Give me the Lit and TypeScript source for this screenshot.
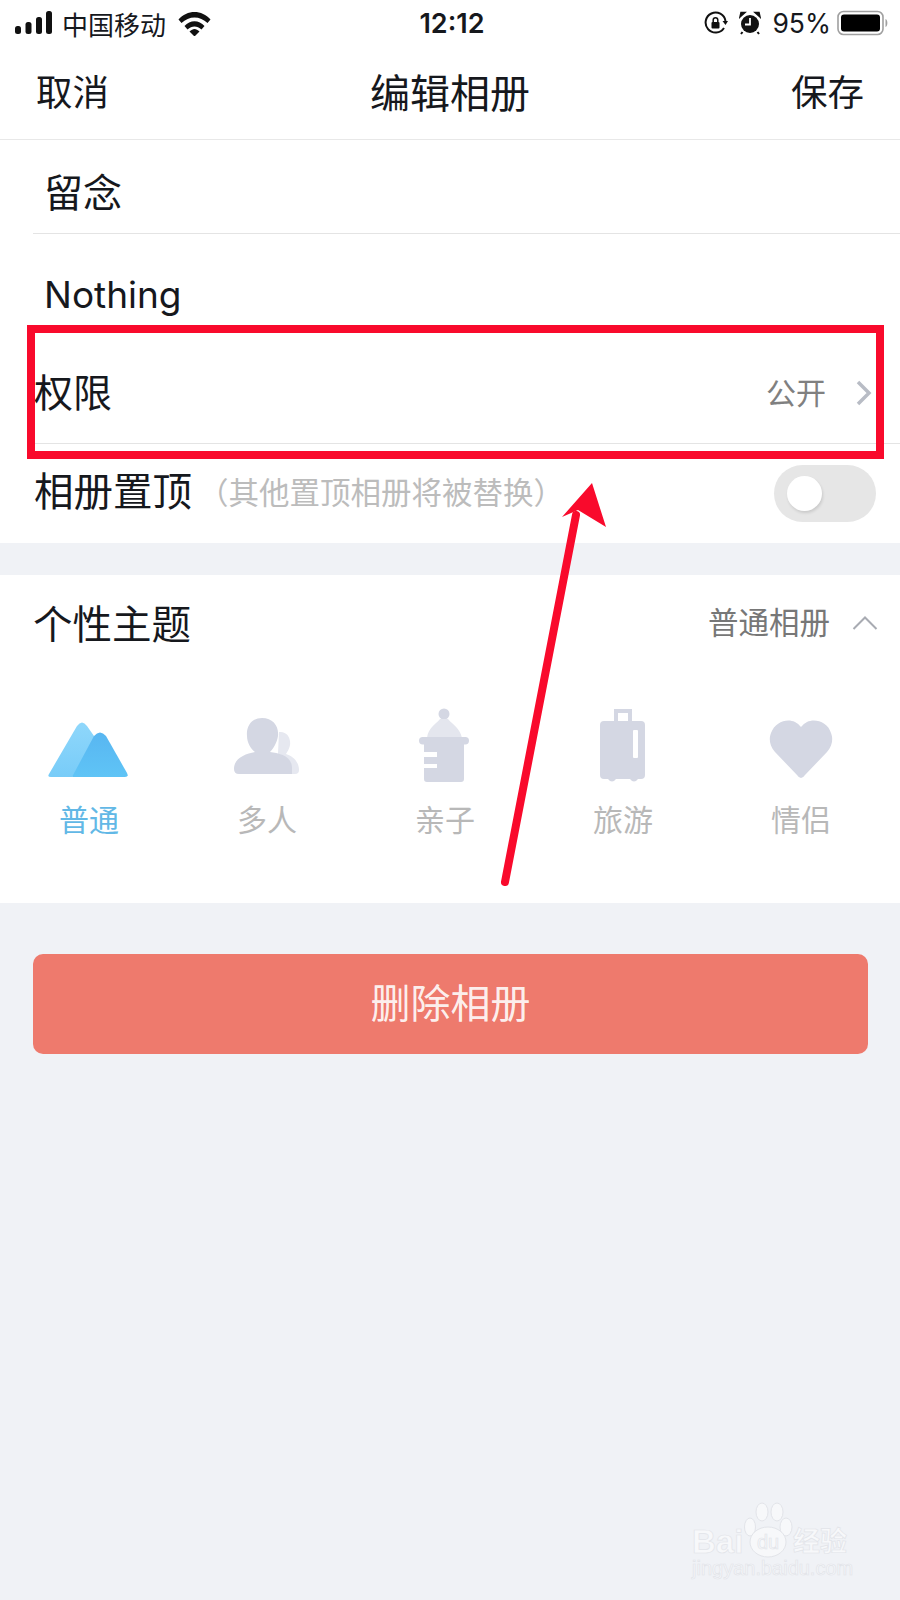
import { html, css, svg, LitElement } from 'lit';
import { customElement } from 'lit/decorators.js';

const icons = {
  mountain: svg`
    <defs>
      <linearGradient id="m1" x1="0" y1="0" x2="0" y2="1"><stop offset="0" stop-color="#8fd7fb"/><stop offset="1" stop-color="#78ccf8"/></linearGradient>
      <linearGradient id="m2" x1="0" y1="0" x2="0" y2="1"><stop offset="0" stop-color="#58b6f1"/><stop offset="1" stop-color="#5fc4f6"/></linearGradient>
    </defs>
    <path d="M10 74 L38 26 Q43 19 48 26 L62 46 L33 77 L12 77 Q8 77 10 74Z" fill="url(#m1)"/>
    <path d="M33 77 L55 36 Q61 29 67 36 L88 73 Q90 77 86 77Z" fill="url(#m2)"/>`,
  people: svg`
    <path d="M62 32 C70 31 74 38 73 45 C72 50 70 52 69 54 C76 56 82 62 82 70 Q82 74 78 74 L60 74 Z" fill="#e6e8f0"/>
    <path d="M45 18 C56 18 62 26 61 36 C60 43 56 49 53 52 C62 53 75 56 75 68 L75 74 L22 74 Q17 74 17 69 C17 58 28 54 38 52 C34 49 30 43 30 36 C29 26 35 18 45 18Z" fill="#d4d7e3"/>`,
  bottle: svg`
    <circle cx="49" cy="14" r="5.5" fill="#d4d7e3"/>
    <path d="M32 38 C33 28 40 25 45 19 L53 19 C58 25 65 28 67 38Z" fill="#e4e6ee"/>
    <rect x="24" y="37" width="50" height="7.5" rx="3.7" fill="#d4d7e3"/>
    <path d="M29 44 H69 V79 Q69 82 66 82 H32 Q29 82 29 79 V68 H42 V64 H29 V57 H42 V52 H29Z" fill="#d4d7e3"/>`,
  suitcase: svg`
    <path d="M41 24 V9 H59 V24 H55 V13 H45 V24Z" fill="#d4d7e3"/>
    <path d="M31 21 H68 Q72 21 72 25 V75 Q72 79 68 79 L65 79 Q61 84 57 79 H43 Q39 84 35 79 L31 79 Q27 79 27 75 V25 Q27 21 31 21Z" fill="#d4d7e3"/>
    <rect x="60" y="30" width="5" height="28" rx="1" fill="#fff"/>`,
  heart: svg`
    <path d="M50 78 Q48 78 46 75 L24 52 C18 45 18 38 20 33 C24 22 36 18 44 22 Q48 24 50 27 Q52 24 56 22 C64 18 77 22 80 33 C82 38 82 45 76 52 L54 75 Q52 78 50 78Z" fill="#d4d7e3"/>`,
};

const themes = [
  { label: '普通', icon: icons.mountain, active: true },
  { label: '多人', icon: icons.people, active: false },
  { label: '亲子', icon: icons.bottle, active: false },
  { label: '旅游', icon: icons.suitcase, active: false },
  { label: '情侣', icon: icons.heart, active: false },
];

@customElement('app-root')
export class AppRoot extends LitElement {
  static styles = css`
    :host {
      display: block;
      position: relative;
      width: 900px;
      height: 1600px;
      overflow: hidden;
      background: #f0f2f6;
      color: #16181d;
      font-family: 'Inter', 'Noto Sans CJK SC', sans-serif;
    }

    .status {
      height: 46px;
      background: #fff;
      display: grid;
      grid-template-columns: 1fr auto 1fr;
      align-items: center;
      padding: 0 11px 0 15px;
      font-size: 25px;
    }
    .status-left, .status-right { display: flex; align-items: center; }
    .status-left { gap: 10px; }
    .status-left .carrier { margin-right: 2px; font-size: 26px; }
    .status-right { justify-content: flex-end; gap: 11px; }
    .time { font-size: 27px; font-weight: 600; }
    .pct { font-size: 26.5px; }
    .battery { margin-left: -5px; }

    .nav {
      height: 94px;
      box-sizing: border-box;
      background: #fff;
      border-bottom: 1px solid #e8e8e8;
      display: flex;
      align-items: center;
      justify-content: space-between;
      padding: 0 36px 4px;
      font-size: 36.5px;
    }
    .nav .title { font-size: 40px; }

    .form { background: #fff; padding-left: 33px; }
    .row {
      height: 99px;
      box-sizing: border-box;
      display: flex;
      align-items: center;
      font-size: 39px;
      border-bottom: 1px solid #e4e4e4;
    }
    .row.name { height: 94px; padding: 6px 0 0 11px; }
    .row.desc { height: 111px; padding: 10px 0 0 11px; border-bottom: 0; font-size: 37px; }
    .row.perm { padding: 0 28px 0 1px; }
    .row.perm .label { flex: 1; margin-bottom: 8px; }
    .row.top { border: 0; padding: 0 24px 0 1px; }
    .row.top .label { font-size: 39.5px; margin-bottom: 11px; }
    .muted { color: #808080; font-size: 30px; margin: 0 30px 6px 0; }
    .perm svg { margin-bottom: 2px; }
    .hint { color: #bcbcbc; font-size: 30.5px; flex: 1; margin: 0 0 6px 6px; }

    .switch {
      position: relative;
      flex: none;
      width: 102px;
      height: 57px;
      margin-bottom: 1px;
      border-radius: 29px;
      background: #e6e6e6;
    }
    .knob {
      position: absolute;
      left: 13px;
      top: 11px;
      width: 35px;
      height: 35px;
      border-radius: 50%;
      background: #fff;
      box-shadow: 1px 2px 3px rgba(0, 0, 0, 0.12);
    }

    .theme {
      margin-top: 32px;
      height: 328px;
      background: #fff;
    }
    .theme-head {
      height: 102px;
      box-sizing: border-box;
      display: flex;
      align-items: center;
      padding: 0 22px 0 33px;
      font-size: 39.5px;
    }
    .theme-head .name { flex: 1; margin-bottom: 10px; }
    .theme-head .value { color: #777; font-size: 30.5px; margin: 0 22px 10px 0; }
    .theme-head svg { margin-bottom: 6px; }
    .theme-list {
      margin-top: 23px;
      padding-right: 10px;
      display: grid;
      grid-template-columns: repeat(5, 1fr);
    }
    .item {
      display: flex;
      flex-direction: column;
      align-items: center;
      color: #b8b8b8;
      font-size: 30px;
    }
    .item.active { color: #62b8e6; }
    .item svg { display: block; width: 100px; height: 90px; }
    .item span { line-height: 40px; margin-top: 10px; }

    .delete {
      margin: 51px 32px 0 33px;
      height: 100px;
      box-sizing: border-box;
      padding-bottom: 6px;
      border-radius: 10px;
      background: #ee7a6d;
      color: rgba(255, 255, 255, 0.9);
      font-size: 40px;
      display: flex;
      align-items: center;
      justify-content: center;
    }

    .mark {
      position: absolute;
      left: 27px;
      top: 325px;
      width: 857px;
      height: 134px;
      box-sizing: border-box;
      border: 8px solid #f90a2c;
    }
    .arrow { position: absolute; left: 480px; top: 470px; }

    .watermark { position: absolute; left: 690px; top: 1500px; width: 180px; height: 95px; }
    .wm-text {
      font-family: 'Liberation Sans', 'Noto Sans CJK SC', sans-serif;
      fill: #f7f8fa;
      stroke: #e2e4e9;
      stroke-width: 0.7;
    }
  `;

  render() {
    return html`
      <div class="status">
        <div class="status-left">
          <svg width="37" height="24" viewBox="0 0 37 24">
            <rect x="0" y="15" width="6" height="8" rx="2.5" fill="#111"/>
            <rect x="10.5" y="11" width="6" height="12" rx="2.5" fill="#111"/>
            <rect x="21" y="6" width="6" height="17" rx="2.5" fill="#111"/>
            <rect x="31" y="0" width="6" height="23" rx="2.5" fill="#111"/>
          </svg>
          <span class="carrier">中国移动</span>
          <svg width="33" height="25" viewBox="0 0 33 25">
            <path d="M0.5 8.5 C9 -1.5 24 -1.5 32.5 8.5 L29.5 12 C22 4.5 11 4.5 3.5 12Z" fill="#111"/>
            <path d="M6.5 15 C12 8.5 21 8.5 26.5 15 L23.5 18.5 C19 14.5 14 14.5 9.5 18.5Z" fill="#111"/>
            <path d="M11.5 20.5 C15 17 18 17 21.5 20.5 L16.5 25.5Z" fill="#111"/>
          </svg>
        </div>
        <span class="time">12:12</span>
        <div class="status-right">
          <svg width="24" height="24" viewBox="0 0 24 24">
            <path d="M20 17 A10 10 0 1 1 21.5 10" fill="none" stroke="#111" stroke-width="2"/>
            <path d="M18.5 10 H24 L21.5 14Z" fill="#111"/>
            <rect x="7.5" y="11" width="8" height="6.5" rx="1" fill="#111"/>
            <path d="M9.2 11 V9 A2.3 2.3 0 0 1 13.8 9 V11" fill="none" stroke="#111" stroke-width="1.5"/>
          </svg>
          <svg width="22" height="24" viewBox="0 0 22 24">
            <circle cx="11" cy="13" r="9" fill="#111"/>
            <path d="M1 6 L6 1.5 L2 1.5Z M21 6 L16 1.5 L20 1.5Z" fill="#111" stroke="#111" stroke-width="1.5"/>
            <path d="M3.5 21 L2 23 M18.5 21 L20 23" stroke="#111" stroke-width="2"/>
            <path d="M11 7 V13.5 H6" fill="none" stroke="#fff" stroke-width="1.8"/>
          </svg>
          <span class="pct">95%</span>
          <svg class="battery" width="52" height="26" viewBox="0 0 52 26">
            <rect x="1" y="1.5" width="45" height="23" rx="5.5" fill="none" stroke="#a0a0a0" stroke-width="1.6"/>
            <rect x="4" y="4.5" width="39" height="17" rx="3" fill="#000"/>
            <path d="M48.5 9 C51 10 51 16 48.5 17Z" fill="#a0a0a0"/>
          </svg>
        </div>
      </div>

      <div class="nav">
        <span>取消</span>
        <span class="title">编辑相册</span>
        <span>保存</span>
      </div>

      <div class="form">
        <div class="row name">留念</div>
        <div class="row desc">Nothing</div>
        <div class="row perm">
          <span class="label">权限</span>
          <span class="muted">公开</span>
          <svg width="16" height="26" viewBox="0 0 16 26">
            <path d="M2 2 L13 13 L2 24" fill="none" stroke="#b8bcc5" stroke-width="3.5"/>
          </svg>
        </div>
        <div class="row top">
          <span class="label">相册置顶</span>
          <span class="hint">（其他置顶相册将被替换）</span>
          <div class="switch"><div class="knob"></div></div>
        </div>
      </div>

      <div class="theme">
        <div class="theme-head">
          <span class="name">个性主题</span>
          <span class="value">普通相册</span>
          <svg width="26" height="16" viewBox="0 0 26 16">
            <path d="M1.5 14 L13 2.5 L24.5 14" fill="none" stroke="#a8abb2" stroke-width="2"/>
          </svg>
        </div>
        <div class="theme-list">
          ${themes.map(t => html`
            <div class="item ${t.active ? 'active' : ''}">
              <svg viewBox="0 0 100 90">${t.icon}</svg>
              <span>${t.label}</span>
            </div>
          `)}
        </div>
      </div>

      <div class="delete">删除相册</div>

      <div class="mark"></div>
      <svg class="arrow" width="140" height="420" viewBox="0 0 140 420">
        <path d="M25 412 L96 45" fill="none" stroke="#f90a2c" stroke-width="8" stroke-linecap="round"/>
        <path d="M112 13 L82 47 L98 40 L126 57Z" fill="#f90a2c"/>
      </svg>

      <svg class="watermark" viewBox="0 0 180 95">
        <ellipse cx="72" cy="12" rx="6" ry="9" fill="#f7f8fa" stroke="#e2e4e9"/>
        <ellipse cx="87" cy="12" rx="6" ry="9" fill="#f7f8fa" stroke="#e2e4e9"/>
        <ellipse cx="96" cy="27" rx="6" ry="9" fill="#f7f8fa" stroke="#e2e4e9"/>
        <ellipse cx="60" cy="27" rx="5.5" ry="9" fill="#f7f8fa" stroke="#e2e4e9"/>
        <ellipse cx="78" cy="42" rx="18" ry="15" fill="#f7f8fa" stroke="#e2e4e9"/>
        <text class="wm-text" x="2" y="53" font-size="33" font-weight="700">Bai</text>
        <text class="wm-text" x="67" y="49" font-size="20">du</text>
        <text class="wm-text" x="103" y="51" font-size="27" font-weight="700">经验</text>
        <text class="wm-text" x="2" y="75" font-size="20">jingyan.baidu.com</text>
      </svg>
    `;
  }
}
